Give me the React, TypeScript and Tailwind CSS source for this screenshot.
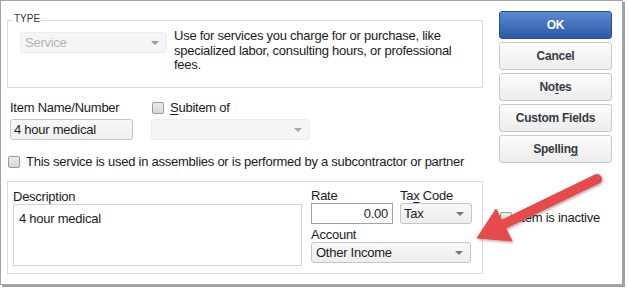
import React from "react";

function Caret({ color = "#777" }: { color?: string }) {
  return (
    <svg width="8" height="4" viewBox="0 0 8 4" className="shrink-0">
      <path d="M0 0 L8 0 L4 4 Z" fill={color} />
    </svg>
  );
}

function Check() {
  return (
    <span className="block w-[12px] h-[12px] shrink-0 rounded-[2px] border border-[#9a9a9a] bg-gradient-to-b from-[#ececec] to-[#d6d6d6]" />
  );
}

function Btn({ children, primary = false }: { children: React.ReactNode; primary?: boolean }) {
  return primary ? (
    <div className="h-[28px] flex items-center justify-center rounded-[3px] border border-[#2b4f95] bg-gradient-to-b from-[#5b8ad3] to-[#2d58a6] text-white font-bold text-[12px]">
      {children}
    </div>
  ) : (
    <div className="h-[28px] flex items-center justify-center rounded-[3px] border border-[#c9c9c9] bg-gradient-to-b from-[#fdfdfd] to-[#ececec] text-[#333a44] font-bold text-[12px]">
      {children}
    </div>
  );
}

export default function App() {
  return (
    <div
      className="relative w-[628px] h-[290px] bg-white overflow-hidden text-[13px] text-[#1b1b1b] tracking-[-0.25px]"
      style={{ fontFamily: '"Liberation Sans", Arial, sans-serif' }}
    >
      <div className="w-[623px] h-[285px] border border-[#a4a4a4] shadow-[2px_2px_0_#a0a0a0] flex pl-[6px]">
        {/* left column */}
        <div className="w-[476px] pt-[19px] flex flex-col">
          <div className="relative h-[68px] border border-[#dcdcdc] pl-[12px] pt-[8px] flex items-start">
            <span className="absolute left-[5px] top-[-7px] bg-white px-[1px] text-[10px] leading-[10px] tracking-normal text-[#333]">
              TYPE
            </span>
            <div className="mt-[3px] w-[147px] h-[21px] rounded-[3px] border border-[#ececec] bg-[#f5f5f5] flex items-center justify-between pl-[4px] pr-[7px] text-[#b4b4b4]">
              <span>Service</span>
              <Caret color="#9a9a9a" />
            </div>
            <p className="ml-[7px] w-[304px] leading-[14.5px]">
              Use for services you charge for or purchase, like specialized labor, consulting hours, or professional fees.
            </p>
          </div>

          <div className="mt-[12px] flex">
            <div className="w-[123px] ml-[3px] flex flex-col">
              <div className="leading-[15px]">Item Name/Number</div>
              <div className="mt-[4px] h-[21px] rounded-[3px] border border-[#c4c4c4] bg-gradient-to-b from-[#f8f8f8] to-[#efefef] flex items-center pl-[3px]">
                4 hour medical
              </div>
            </div>
            <div className="ml-[18px] w-[159px] flex flex-col">
              <div className="h-[15px] flex items-center">
                <span className="ml-[1px]">
                  <Check />
                </span>
                <span className="ml-[6px] leading-[15px]">
                  <span className="underline underline-offset-2">S</span>ubitem of
                </span>
              </div>
              <div className="mt-[4px] h-[21px] rounded-[3px] border border-[#ececec] bg-[#f5f5f5] flex items-center justify-end pr-[7px]">
                <Caret color="#a8a8a8" />
              </div>
            </div>
          </div>

          <div className="mt-[14px] h-[15px] flex items-center whitespace-nowrap">
            <span className="ml-[1px]">
              <Check />
            </span>
            <span className="ml-[6px] leading-[15px]">
              This service is used in assemblies or is performed by a subcontractor or partner
            </span>
          </div>

          <div className="mt-[12px] h-[93px] border border-[#dcdcdc] pl-[5px] pt-[7px] flex">
            <div className="w-[289px] flex flex-col">
              <div className="leading-[15px]">Description</div>
              <div className="h-[62px] border border-[#d4d4d4] bg-white pl-[5px] pt-[6px] leading-[15px]">
                4 hour medical
              </div>
            </div>
            <div className="ml-[9px] flex flex-col">
              <div className="flex">
                <div className="w-[82px] flex flex-col">
                  <div className="leading-[14px]">Rate</div>
                  <div className="h-[21px] border border-[#a3a3a3] bg-white flex items-center justify-end pr-[4px]">
                    0.00
                  </div>
                </div>
                <div className="ml-[7px] w-[72px] flex flex-col">
                  <div className="leading-[14px]">
                    Ta<span className="underline underline-offset-2">x</span> Code
                  </div>
                  <div className="h-[21px] rounded-[3px] border border-[#c6c6c6] bg-gradient-to-b from-[#f8f8f8] to-[#eeeeee] flex items-center justify-between pl-[3px] pr-[7px]">
                    <span>Tax</span>
                    <Caret />
                  </div>
                </div>
              </div>
              <div className="mt-[3px] leading-[15px]">Account</div>
              <div className="w-[160px] h-[21px] rounded-[3px] border border-[#c6c6c6] bg-gradient-to-b from-[#f8f8f8] to-[#eeeeee] flex items-center justify-between pl-[4px] pr-[7px]">
                <span>Other Income</span>
                <Caret />
              </div>
            </div>
          </div>
        </div>

        {/* right column */}
        <div className="ml-[16px] w-[113px] pt-[10px] flex flex-col">
          <div className="flex flex-col gap-[3px]">
            <Btn primary>OK</Btn>
            <Btn>Cancel</Btn>
            <Btn>
              <span>
                No<span className="underline underline-offset-2">t</span>es
              </span>
            </Btn>
            <Btn>Custom Fields</Btn>
            <Btn>
              <span>
                Spellin<span className="underline underline-offset-2">g</span>
              </span>
            </Btn>
          </div>
          <div className="mt-[47px] h-[15px] flex items-center whitespace-nowrap">
            <span className="ml-[1px]">
              <Check />
            </span>
            <span className="ml-[6px] leading-[15px]">Item is inactive</span>
          </div>
        </div>
      </div>

      {/* annotation arrow */}
      <svg className="absolute left-0 top-0 pointer-events-none" width={628} height={290} viewBox="0 0 628 290">
        <defs>
          <filter id="sh" x="-20%" y="-20%" width="140%" height="140%">
            <feDropShadow dx="1" dy="1.5" stdDeviation="1.2" floodColor="#000" floodOpacity="0.3" />
          </filter>
        </defs>
        <g filter="url(#sh)" fill="#e64b4b" stroke="#e64b4b">
          <line x1="597" y1="179" x2="502" y2="225" strokeWidth="10" strokeLinecap="round" />
          <polygon points="477,238 496,209 512,241" strokeWidth="1" strokeLinejoin="round" />
        </g>
      </svg>
    </div>
  );
}
